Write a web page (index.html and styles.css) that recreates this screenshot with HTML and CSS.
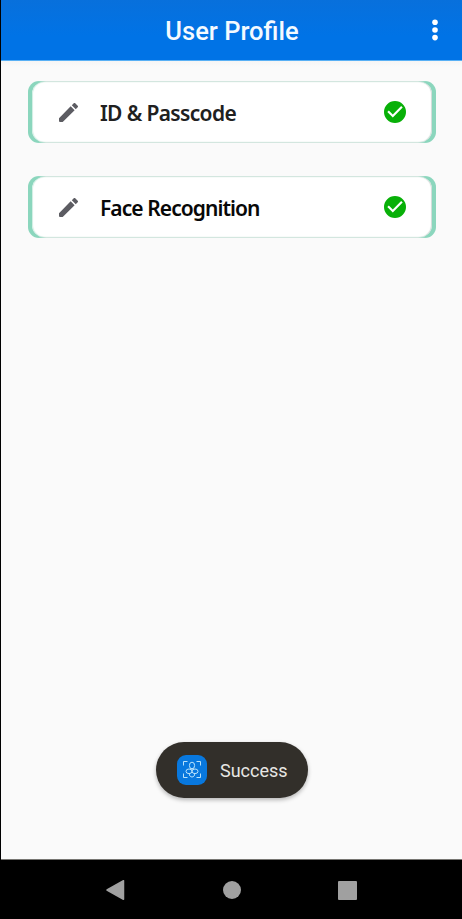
FILE: index.html
```html
<!DOCTYPE html>
<html lang="en">
<head>
<meta charset="utf-8">
<title>User Profile</title>
<link rel="stylesheet" href="styles.css">
</head>
<body>
<div class="screen">
  <header class="appbar">
    <h1 class="title">User Profile</h1>
    <svg class="more" width="8" height="24" viewBox="0 0 8 24" fill="#fff"><circle cx="4" cy="4.2" r="2.8"/><circle cx="4" cy="12" r="2.8"/><circle cx="4" cy="19.6" r="2.8"/></svg>
  </header>
  <main class="content">
    <section class="card"><div class="card-body">
      <svg class="pencil" viewBox="3 3 18 18"><path d="M3 17.5V20q0 1 1 1h2.500L17.810 9.940l-3.750-3.750L3 17.500zM20.710 7.040a1 1 0 0 0 0-1.410l-2.340-2.340a1 1 0 0 0-1.410 0l-1.830 1.830 3.750 3.750 1.830-1.830z"/></svg>
      <span class="label label-id">ID &amp; Passcode</span>
      <svg class="check" viewBox="2 2 20 20"><path d="M12 2a10 10 0 1 0 0 20 10 10 0 0 0 0-20zm-2 15-5-5 1.41-1.41L10 14.17l7.59-7.59L19 8l-9 9z"/></svg>
    </div></section>
    <section class="card"><div class="card-body">
      <svg class="pencil" viewBox="3 3 18 18"><path d="M3 17.5V20q0 1 1 1h2.500L17.810 9.940l-3.750-3.750L3 17.500zM20.710 7.040a1 1 0 0 0 0-1.410l-2.340-2.340a1 1 0 0 0-1.410 0l-1.830 1.830 3.750 3.750 1.830-1.830z"/></svg>
      <span class="label label-face">Face Recognition</span>
      <svg class="check" viewBox="2 2 20 20"><path d="M12 2a10 10 0 1 0 0 20 10 10 0 0 0 0-20zm-2 15-5-5 1.41-1.41L10 14.17l7.59-7.59L19 8l-9 9z"/></svg>
    </div></section>
    <div class="toast">
      <svg class="app-icon" viewBox="0 0 30 30"><rect width="30" height="30" rx="9" fill="#0878de"/><g fill="none" stroke="#b9e2fb" stroke-width="1"><path d="M6.500 10.500v-4h4M19.500 6.500h4v4M6.500 18.500v4h4M19.500 22.500h4v-4"/><ellipse cx="15" cy="10.500" rx="2.600" ry="3.300"/><ellipse cx="12" cy="16.300" rx="3" ry="2.300"/><ellipse cx="18" cy="16.300" rx="3" ry="2.300"/><path d="M13 14h4M12.500 18.500c-.5 2 .8 3.500 2.500 3.500s3-1.500 2.500-3.500"/></g></svg>
      <span class="toast-text">Success</span>
    </div>
  </main>
  <nav class="navbar">
    <svg width="20" height="22" viewBox="0 0 20 22"><path d="M2 11 18.500 1.700v18.600z" fill="#a0a0a0" stroke="#a0a0a0" stroke-width="1.500" stroke-linejoin="round"/></svg>
    <span class="home"></span>
    <span class="recents"></span>
  </nav>
</div>
</body>
</html>
```
FILE: styles.css
```css
* { box-sizing: border-box; }
body { margin: 0; background: #fafafa; font-family: Roboto, sans-serif; }
.screen {
  width: 462px;
  height: 919px;
  display: flex;
  flex-direction: column;
  border-left: 1px solid #000;
  overflow: hidden;
}
.appbar {
  height: 61px;
  display: grid;
  grid-template-columns: 60px 1fr 60px;
  align-items: center;
  background: linear-gradient(#0870dc, #0073e6 60%);
  border-bottom: 1px solid #58b0f5;
}
.title {
  grid-column: 2;
  margin: 0;
  padding: 2px 0 0 1px;
  text-align: center;
  font-size: 25.5px;
  line-height: 30px;
  font-weight: 500;
  color: #f4faff;
}
.more { margin-left: 29px; }
.content {
  flex: 1;
  display: flex;
  flex-direction: column;
  padding: 20px 26px 61px 27px;
  background: linear-gradient(#f5f5f5, #fafafa 6px);
}
.card {
  height: 62px;
  margin-bottom: 33px;
  padding: 1px 4px;
  border-radius: 11px;
  background: linear-gradient(90deg, #8bd6bd 10px, #d3e6df 18px, #d3e6df calc(100% - 18px), #8bd6bd calc(100% - 10px));
}
.card-body {
  height: 60px;
  display: flex;
  align-items: center;
  padding: 0 26px 0 27px;
  background: #fff;
  border-radius: 12px;
  box-shadow: inset 1px 0 1px #d0eee3, inset -1px 0 1px #cfdad6;
}
.pencil { width: 19px; height: 19px; fill: #5c5c62; }
.label {
  flex: 1;
  margin-left: 22px;
  padding-top: 1px;
  font: 600 21px/28px "Noto Sans", sans-serif;
  white-space: nowrap;
}
.label-id { color: #202020; letter-spacing: -0.65px; }
.label-face { color: #080808; letter-spacing: -0.93px; }
.check { width: 22px; height: 22px; fill: #08b008; }
.toast {
  width: 152px;
  height: 56px;
  margin: auto 0 0 128px;
  display: flex;
  align-items: center;
  padding-left: 21px;
  border-radius: 28px;
  background: #322f2a;
  box-shadow: 0 2px 4px rgba(0, 0, 0, .28);
}
.app-icon { width: 30px; height: 30px; }
.toast-text { margin-left: 13px; font-size: 18px; color: #e8e7e4; }
.navbar {
  height: 60px;
  display: flex;
  align-items: center;
  padding: 1px 0 0 104px;
  background: #000;
  border-top: 1px solid #777672;
}
.home { width: 18px; height: 18px; margin-left: 98px; border-radius: 50%; background: #a0a0a0; }
.recents { width: 19px; height: 19px; margin-left: 97px; border-radius: 1px; background: #a0a0a0; }
```
